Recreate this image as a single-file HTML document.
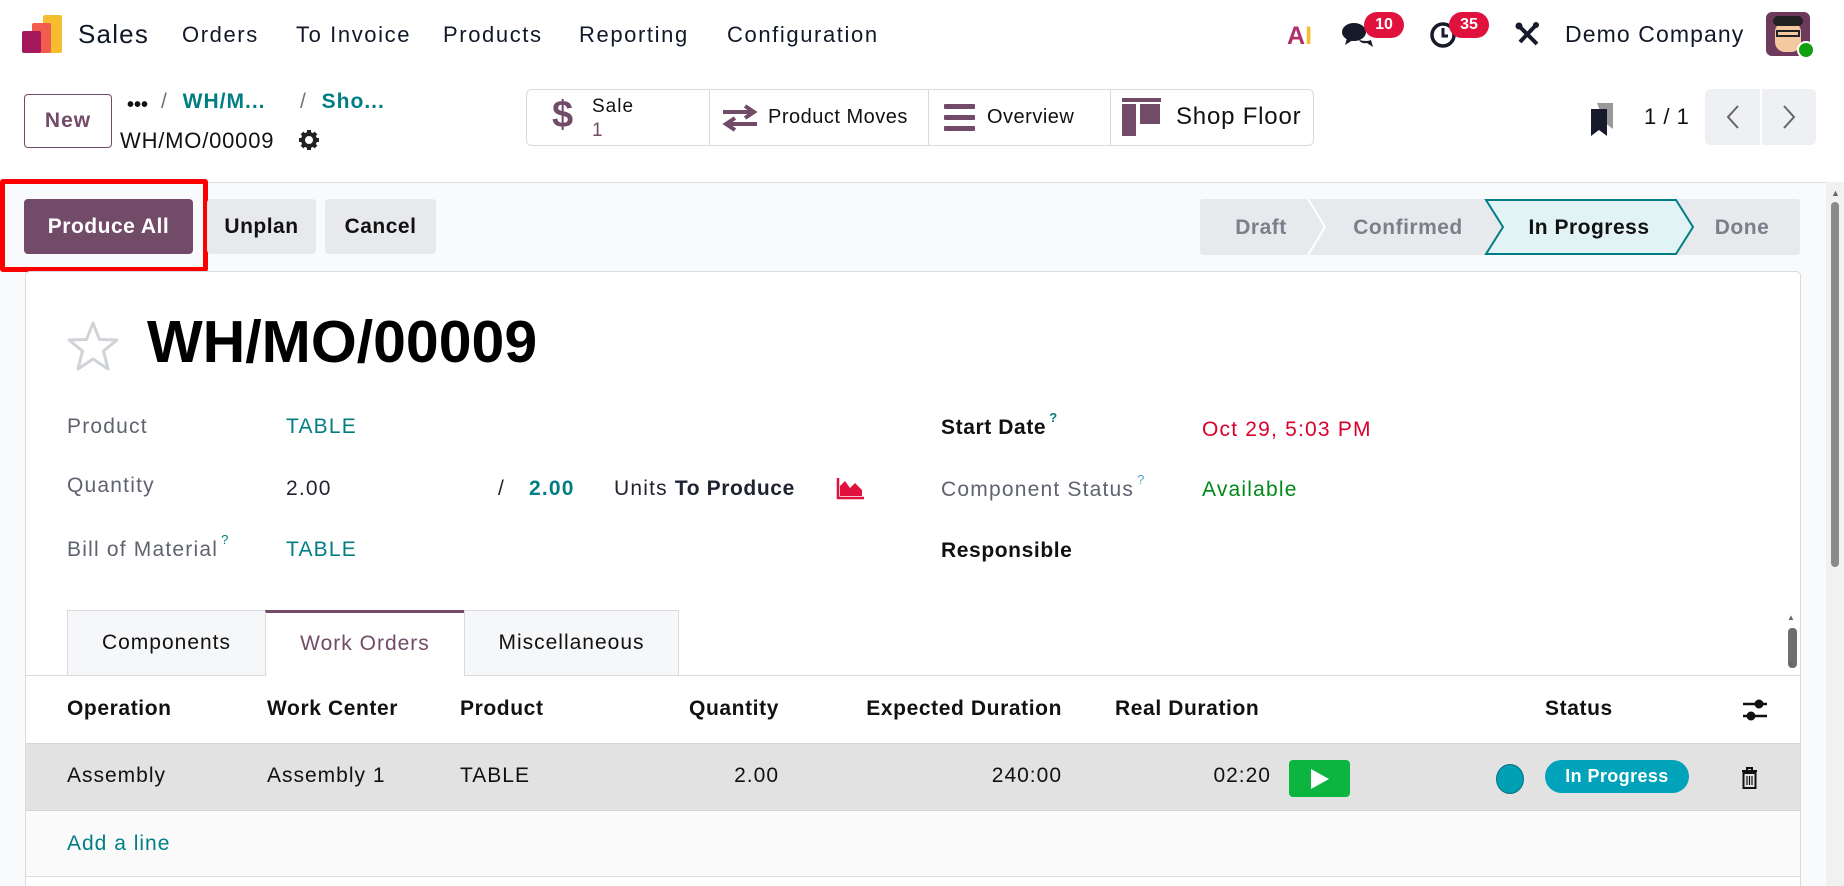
<!DOCTYPE html>
<html><head><meta charset="utf-8"><style>
*{box-sizing:border-box;margin:0;padding:0}
html{overflow:hidden;width:1844px;height:886px}
body{width:1844px;height:886px;overflow:hidden;background:#fff;font-family:"Liberation Sans",sans-serif;color:#1f2330;position:relative;letter-spacing:1px}
.a{position:absolute;white-space:nowrap}
.nav{font-size:22px;color:#111827;top:22px;letter-spacing:1.6px}
.lbl{font-size:21px;color:#5f636f;letter-spacing:1.2px}
.val{font-size:21px;letter-spacing:1.2px}
.teal{color:#017e84}
.th{font-size:21px;font-weight:bold;color:#111;top:697px;letter-spacing:0.6px}
.td{font-size:21px;color:#111;top:764px;letter-spacing:1px}
sup{font-size:13px;color:#017e84;vertical-align:top;position:relative;top:-6px;margin-left:3px}
</style></head><body>

<!-- navbar -->
<div class="a" style="left:43px;top:15px;width:19px;height:38px;background:#f6bd31;border-radius:2px"></div>
<div class="a" style="left:32px;top:23px;width:19px;height:30px;background:#f15c4f;border-radius:2px"></div>
<div class="a" style="left:22px;top:31px;width:19px;height:22px;background:#a5185d;border-radius:2px"></div>
<div class="a" style="left:78px;top:19px;font-size:26px;color:#111827;letter-spacing:1.2px">Sales</div>
<div class="a nav" style="left:182px">Orders</div>
<div class="a nav" style="left:296px">To Invoice</div>
<div class="a nav" style="left:443px">Products</div>
<div class="a nav" style="left:579px">Reporting</div>
<div class="a nav" style="left:727px">Configuration</div>

<div class="a" style="left:1287px;top:22px;font-size:25px;font-weight:bold;color:#f6bd31;letter-spacing:0"><span style="color:#b0306e">A</span>I</div>
<svg class="a" style="left:1341px;top:20px" width="34" height="28" viewBox="0 0 34 28"><ellipse cx="13" cy="12" rx="12" ry="9" fill="#161a2b"/><path d="M6 18 L4 25 L12 20Z" fill="#161a2b"/><path d="M18 20 Q26 22 30 20 L32 27 L26 23 Q20 24 18 20Z" fill="#161a2b"/></svg>
<div class="a" style="left:1364px;top:12px;width:40px;height:26px;border-radius:13px;background:#e0123d;color:#fff;font-size:16px;font-weight:bold;text-align:center;line-height:26px;letter-spacing:0">10</div>
<svg class="a" style="left:1429px;top:21px" width="28" height="28" viewBox="0 0 28 28"><circle cx="14" cy="14" r="11" fill="none" stroke="#161a2b" stroke-width="3.5"/><path d="M14 7V15H19" fill="none" stroke="#161a2b" stroke-width="3"/></svg>
<div class="a" style="left:1449px;top:12px;width:40px;height:26px;border-radius:13px;background:#e0123d;color:#fff;font-size:16px;font-weight:bold;text-align:center;line-height:26px;letter-spacing:0">35</div>
<svg class="a" style="left:1515px;top:21px" width="26" height="26" viewBox="0 0 26 26"><path d="M3 4L22 23" stroke="#161a2b" stroke-width="4"/><path d="M22 3L5 21" stroke="#161a2b" stroke-width="4"/><circle cx="21" cy="4" r="3" fill="#161a2b"/><circle cx="4" cy="5" r="3.5" fill="#161a2b"/></svg>
<div class="a" style="left:1565px;top:21px;font-size:23px;color:#111827;letter-spacing:1.1px">Demo Company</div>
<div class="a" style="left:1766px;top:12px;width:44px;height:44px;border-radius:6px;background:#6e3a5c;overflow:hidden">
<div style="position:absolute;left:9px;top:10px;width:26px;height:30px;background:#f4c9a0;border-radius:10px"></div>
<div style="position:absolute;left:7px;top:4px;width:30px;height:10px;background:#222;border-radius:6px"></div>
<div style="position:absolute;left:10px;top:18px;width:24px;height:7px;border:2px solid #222"></div></div>
<div class="a" style="left:1797px;top:41px;width:18px;height:18px;border-radius:50%;background:#12a012;border:2px solid #fff"></div>

<!-- control panel -->
<div class="a" style="left:24px;top:94px;width:88px;height:54px;border:1px solid #714b67;border-radius:4px;color:#714b67;font-size:21px;font-weight:bold;text-align:center;line-height:52px">New</div>
<div class="a" style="left:127px;top:94px;font-size:20px;font-weight:bold;color:#111;letter-spacing:0">•••</div>
<div class="a" style="left:161px;top:90px;font-size:21px;color:#6c757d">/ <b class="teal" style="margin-left:8px">WH/M...</b></div>
<div class="a" style="left:300px;top:90px;font-size:21px;color:#6c757d">/ <b class="teal" style="margin-left:8px">Sho...</b></div>
<div class="a" style="left:120px;top:128px;font-size:22px;color:#111;letter-spacing:0.8px">WH/MO/00009</div>
<svg class="a" style="left:299px;top:130px" width="20" height="20" viewBox="0 0 20 20"><circle cx="10" cy="10" r="6" fill="none" stroke="#222" stroke-width="4"/><g stroke="#222" stroke-width="4"><path d="M10 0V4M10 16V20M0 10H4M16 10H20M3 3L5.5 5.5M14.5 14.5L17 17M3 17L5.5 14.5M14.5 5.5L17 3"/></g></svg>

<div class="a" style="left:526px;top:89px;width:788px;height:57px;border:1px solid #d8dadd;border-radius:6px"></div>
<div class="a" style="left:709px;top:89px;width:1px;height:57px;background:#d8dadd"></div>
<div class="a" style="left:928px;top:89px;width:1px;height:57px;background:#d8dadd"></div>
<div class="a" style="left:1110px;top:89px;width:1px;height:57px;background:#d8dadd"></div>
<div class="a" style="left:552px;top:94px;font-size:38px;font-weight:bold;color:#714b67">$</div>
<div class="a" style="left:592px;top:96px;font-size:19px;color:#111">Sale</div>
<div class="a" style="left:592px;top:120px;font-size:19px;color:#714b67">1</div>
<svg class="a" style="left:721px;top:104px" width="38" height="28" viewBox="0 0 38 28"><path d="M2 8H32M24 2L33 8L24 14" fill="none" stroke="#714b67" stroke-width="4"/><path d="M36 20H6M14 14L5 20L14 26" fill="none" stroke="#714b67" stroke-width="4"/></svg>
<div class="a" style="left:768px;top:106px;font-size:20px;color:#111;letter-spacing:0.5px">Product Moves</div>
<div class="a" style="left:944px;top:104px;width:31px;height:5px;background:#714b67;border-radius:1px"></div>
<div class="a" style="left:944px;top:115px;width:31px;height:5px;background:#714b67;border-radius:1px"></div>
<div class="a" style="left:944px;top:126px;width:31px;height:5px;background:#714b67;border-radius:1px"></div>
<div class="a" style="left:987px;top:106px;font-size:20px;color:#111;letter-spacing:0.5px">Overview</div>
<div class="a" style="left:1122px;top:98px;width:39px;height:4px;background:#714b67"></div>
<div class="a" style="left:1122px;top:104px;width:14px;height:32px;background:#714b67"></div>
<div class="a" style="left:1140px;top:104px;width:20px;height:20px;background:#714b67"></div>
<div class="a" style="left:1176px;top:103px;font-size:24px;color:#111;letter-spacing:0.8px">Shop Floor</div>

<svg class="a" style="left:1589px;top:103px" width="26" height="33" viewBox="0 0 26 33"><path d="M8 0H24V26L16 20Z" fill="#999"/><path d="M2 6H18V33L10 27L2 33Z" fill="#161a2b"/></svg>
<div class="a" style="left:1644px;top:104px;font-size:22px;color:#111;letter-spacing:0.5px">1 / 1</div>
<div class="a" style="left:1705px;top:89px;width:55px;height:56px;background:#eef0f3;border-radius:5px 0 0 5px"></div>
<div class="a" style="left:1762px;top:89px;width:54px;height:56px;background:#eef0f3;border-radius:0 5px 5px 0"></div>
<svg class="a" style="left:1725px;top:104px" width="16" height="26" viewBox="0 0 16 26"><path d="M13 2L3 13L13 24" fill="none" stroke="#666" stroke-width="2"/></svg>
<svg class="a" style="left:1781px;top:104px" width="16" height="26" viewBox="0 0 16 26"><path d="M3 2L13 13L3 24" fill="none" stroke="#666" stroke-width="2"/></svg>

<!-- main area -->
<div class="a" style="left:0;top:182px;width:1844px;height:704px;background:#f9fafb;border-top:1px solid #d8dadd"></div>
<div class="a" style="left:0;top:179px;width:208px;height:93px;border:5px solid #ff0000;border-radius:3px"></div>
<div class="a" style="left:24px;top:199px;width:169px;height:55px;background:#714b67;border-radius:4px;color:#fff;font-size:21px;font-weight:bold;text-align:center;line-height:55px;letter-spacing:0.5px">Produce All</div>
<div class="a" style="left:207px;top:199px;width:109px;height:55px;background:#e7e9ed;border-radius:4px;color:#111;font-size:21px;font-weight:bold;text-align:center;line-height:55px;letter-spacing:0.5px">Unplan</div>
<div class="a" style="left:325px;top:199px;width:111px;height:55px;background:#e7e9ed;border-radius:4px;color:#111;font-size:21px;font-weight:bold;text-align:center;line-height:55px;letter-spacing:0.5px">Cancel</div>

<svg class="a" style="left:1200px;top:199px;letter-spacing:0.5px" width="600" height="56" viewBox="0 0 600 56">
<rect x="0" y="0" width="600" height="56" fill="#e7e9ed" rx="3"/>
<path d="M108 0L125 28L108 56" fill="none" stroke="#fff" stroke-width="2"/>
<path d="M286 1L303 28L286 55H476L493 28L476 1Z" fill="#e1f3f4" stroke="#017e84" stroke-width="2"/>
<text x="61" y="35" text-anchor="middle" font-family="Liberation Sans" font-size="21" font-weight="bold" fill="#7a7f89">Draft</text>
<text x="208" y="35" text-anchor="middle" font-family="Liberation Sans" font-size="21" font-weight="bold" fill="#7a7f89">Confirmed</text>
<text x="389" y="35" text-anchor="middle" font-family="Liberation Sans" font-size="21" font-weight="bold" fill="#111">In Progress</text>
<text x="542" y="35" text-anchor="middle" font-family="Liberation Sans" font-size="21" font-weight="bold" fill="#7a7f89">Done</text>
</svg>

<!-- page scrollbar -->
<div class="a" style="left:1826px;top:182px;width:18px;height:704px;background:#f1f1f1"></div>
<div class="a" style="left:1831px;top:202px;width:8px;height:365px;background:#8a8a8a;border-radius:4px"></div>
<div class="a" style="left:1831px;top:188px;font-size:9px;color:#666;letter-spacing:0">▲</div>

<!-- sheet -->
<div class="a" style="left:25px;top:271px;width:1776px;height:640px;background:#fff;border:1px solid #d8dadd;border-radius:5px"></div>
<svg class="a" style="left:67px;top:320px" width="52" height="52" viewBox="0 0 52 52"><path d="M26 3L32.5 19.5L50 20L36.5 31L41 49L26 39L11 49L15.5 31L2 20L19.5 19.5Z" fill="none" stroke="#d0d3d8" stroke-width="3" stroke-linejoin="round"/></svg>
<div class="a" style="left:147px;top:308px;font-size:59px;font-weight:bold;color:#000;letter-spacing:0">WH/MO/00009</div>

<div class="a lbl" style="left:67px;top:415px">Product</div>
<div class="a val teal" style="left:286px;top:415px">TABLE</div>
<div class="a lbl" style="left:67px;top:474px">Quantity</div>
<div class="a val" style="left:286px;top:477px">2.00</div>
<div class="a val" style="left:498px;top:477px">/</div>
<div class="a val teal" style="left:529px;top:477px;font-weight:bold">2.00</div>
<div class="a val" style="left:614px;top:477px">Units <b style="letter-spacing:0.6px">To Produce</b></div>
<svg class="a" style="left:836px;top:478px" width="28" height="22" viewBox="0 0 28 22"><path d="M2 0V20H28" fill="none" stroke="#e0123d" stroke-width="2.5"/><path d="M4 18V8L9 3L14 10L19 5L26 12V18Z" fill="#e0123d"/></svg>
<div class="a lbl" style="left:67px;top:538px">Bill of Material<sup>?</sup></div>
<div class="a val teal" style="left:286px;top:538px">TABLE</div>

<div class="a val" style="left:941px;top:416px;font-weight:bold;color:#111;letter-spacing:0.6px">Start Date<sup>?</sup></div>
<div class="a val" style="left:1202px;top:418px;color:#d9002b">Oct 29, 5:03 PM</div>
<div class="a lbl" style="left:941px;top:478px">Component Status<sup style="color:#5aa6c8">?</sup></div>
<div class="a val" style="left:1202px;top:478px;color:#008818">Available</div>
<div class="a val" style="left:941px;top:539px;font-weight:bold;color:#111;letter-spacing:0.6px">Responsible</div>

<!-- tabs -->
<div class="a" style="left:26px;top:675px;width:1774px;height:1px;background:#d8dadd"></div>
<div class="a" style="left:67px;top:610px;width:199px;height:66px;background:#f6f7f9;border:1px solid #d8dadd;font-size:21px;color:#111;text-align:center;line-height:64px">Components</div>
<div class="a" style="left:265px;top:610px;width:200px;height:66px;background:#fff;border:1px solid #d8dadd;border-top:3px solid #714b67;border-bottom:none;font-size:21px;color:#714b67;text-align:center;line-height:62px">Work Orders</div>
<div class="a" style="left:464px;top:610px;width:215px;height:66px;background:#f6f7f9;border:1px solid #d8dadd;font-size:21px;color:#111;text-align:center;line-height:64px">Miscellaneous</div>
<div class="a" style="left:1788px;top:628px;width:9px;height:40px;background:#6e6e6e;border-radius:4px"></div>
<div class="a" style="left:1787px;top:613px;font-size:8px;color:#666;letter-spacing:0">▲</div>
<div class="a" style="left:1787px;top:660px;font-size:8px;color:#666;letter-spacing:0">▼</div>

<!-- table -->
<div class="a th" style="left:67px">Operation</div>
<div class="a th" style="left:267px">Work Center</div>
<div class="a th" style="left:460px">Product</div>
<div class="a th" style="left:659px;width:120px;text-align:right">Quantity</div>
<div class="a th" style="left:812px;width:250px;text-align:right">Expected Duration</div>
<div class="a th" style="left:1115px">Real Duration</div>
<div class="a th" style="left:1545px">Status</div>
<svg class="a" style="left:1742px;top:698px" width="26" height="24" viewBox="0 0 26 24"><path d="M1 6H25M1 18H25" stroke="#111" stroke-width="2.5"/><circle cx="17" cy="6" r="4.5" fill="#111"/><circle cx="9" cy="18" r="4.5" fill="#111"/></svg>

<div class="a" style="left:26px;top:743px;width:1774px;height:68px;background:#e2e2e2;border-top:1px solid #d6d6d6;border-bottom:1px solid #d6d6d6"></div>
<div class="a td" style="left:67px">Assembly</div>
<div class="a td" style="left:267px">Assembly 1</div>
<div class="a td" style="left:460px">TABLE</div>
<div class="a td" style="left:679px;width:100px;text-align:right">2.00</div>
<div class="a td" style="left:962px;width:100px;text-align:right">240:00</div>
<div class="a td" style="left:1171px;width:100px;text-align:right">02:20</div>
<div class="a" style="left:1289px;top:760px;width:61px;height:37px;background:#0bb53f;border-radius:4px"></div>
<svg class="a" style="left:1310px;top:768px" width="20" height="22" viewBox="0 0 20 22"><path d="M1 1L19 11L1 21Z" fill="#fff"/></svg>
<div class="a" style="left:1496px;top:764px;width:28px;height:30px;border-radius:50%;background:#00a0b4;border:1.5px solid #05717f"></div>
<div class="a" style="left:1545px;top:760px;width:144px;height:33px;background:#00a3b9;border-radius:17px;color:#fff;font-size:18px;font-weight:bold;text-align:center;line-height:33px;letter-spacing:0.4px">In Progress</div>
<svg class="a" style="left:1741px;top:767px" width="17" height="22" viewBox="0 0 17 22"><path d="M1 4H16M6 4V1H11V4" fill="none" stroke="#111" stroke-width="2"/><rect x="2.5" y="6" width="12" height="15" fill="none" stroke="#111" stroke-width="2"/><path d="M6 9V18M8.5 9V18M11 9V18" stroke="#111" stroke-width="1.2"/></svg>

<div class="a" style="left:26px;top:811px;width:1774px;height:66px;background:#fafafa;border-bottom:1px solid #d8dadd"></div>
<div class="a teal" style="left:67px;top:832px;font-size:21px">Add a line</div>
</body></html>
